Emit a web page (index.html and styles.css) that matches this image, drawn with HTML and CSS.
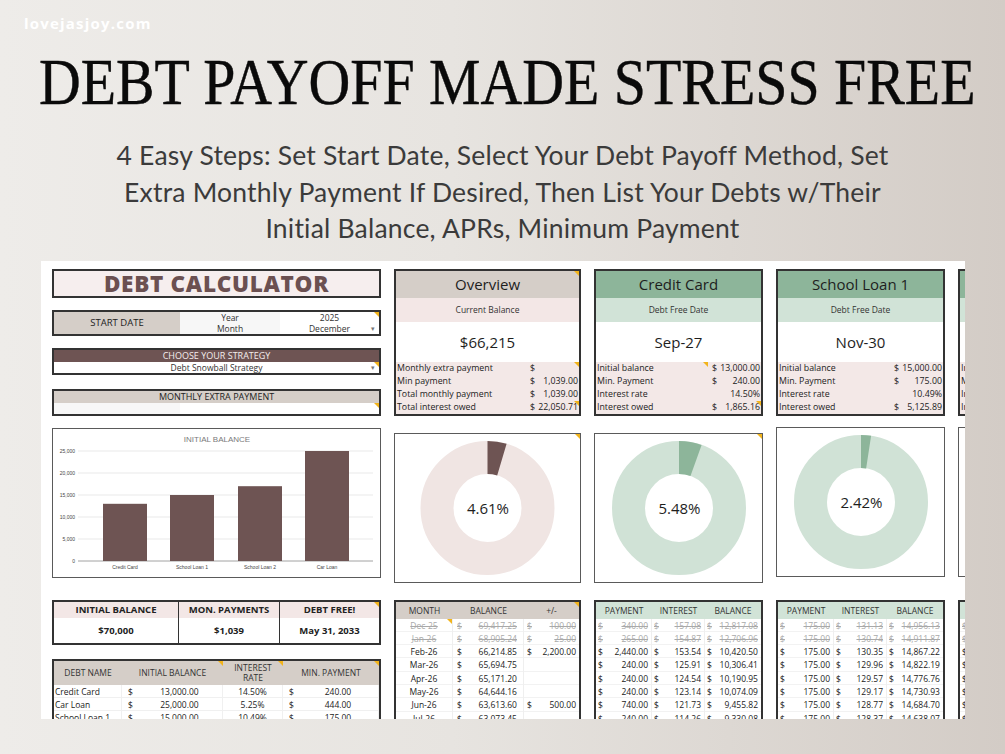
FILE: index.html
```html
<!DOCTYPE html>
<html lang="en">
<head>
<meta charset="utf-8">
<title>Debt Payoff Made Stress Free</title>
<link rel="stylesheet" href="styles.css">
</head>
<body>
<div class="page">
  <div class="brand">lovejasjoy.com</div>
  <h1 class="title"><span>DEBT PAYOFF MADE STRESS FREE</span></h1>
  <p class="subtitle">4 Easy Steps: Set Start Date, Select Your Debt Payoff Method, Set<br>Extra Monthly Payment If Desired, Then List Your Debts w/Their<br>Initial Balance, APRs, Minimum Payment</p>

  <div class="sheet">
    <!-- LEFT COLUMN -->
    <div class="col col-left">
      <div class="calc-title">DEBT CALCULATOR</div>

      <div class="start-date">
        <div class="sd-label">START DATE</div>
        <div class="sd-keys"><span>Year</span><span>Month</span></div>
        <div class="sd-vals"><span>2025</span><span>December</span><i class="caret caret-low">▾</i><b class="flag"></b></div>
      </div>

      <div class="strategy">
        <div class="strategy-head">CHOOSE YOUR STRATEGY</div>
        <div class="strategy-val">Debt Snowball Strategy<i class="caret">▾</i><b class="flag"></b></div>
      </div>

      <div class="extra">
        <div class="extra-head">MONTHLY EXTRA PAYMENT</div>
        <div class="extra-row"><span class="extra-l"></span><span class="extra-r"><b class="flag"></b></span></div>
      </div>

      <div class="chart">
        <svg class="chart-svg" viewBox="0 0 327 148" width="327" height="148">
          <text x="164" y="13" class="ch-title">INITIAL BALANCE</text>
          <g class="ch-grid">
            <line x1="25" y1="22" x2="320" y2="22"/>
            <line x1="25" y1="44" x2="320" y2="44"/>
            <line x1="25" y1="66" x2="320" y2="66"/>
            <line x1="25" y1="88" x2="320" y2="88"/>
            <line x1="25" y1="110" x2="320" y2="110"/>
          </g>
          <line x1="25" y1="132" x2="320" y2="132" class="ch-base"/>
          <g class="ch-axis ch-y">
            <text x="22" y="24">25,000</text>
            <text x="22" y="46">20,000</text>
            <text x="22" y="68">15,000</text>
            <text x="22" y="90">10,000</text>
            <text x="22" y="112">5,000</text>
            <text x="22" y="134">0</text>
          </g>
          <g class="ch-bars">
            <rect x="50" y="74.8" width="44" height="57.2"/>
            <rect x="117" y="66" width="44" height="66"/>
            <rect x="185" y="57.2" width="44" height="74.8"/>
            <rect x="252" y="22" width="44" height="110"/>
          </g>
          <g class="ch-axis ch-x">
            <text x="72" y="140">Credit Card</text>
            <text x="139" y="140">School Loan 1</text>
            <text x="207" y="140">School Loan 2</text>
            <text x="274" y="140">Car Loan</text>
          </g>
        </svg>
      </div>

      <div class="summary">
        <div class="sum-head">INITIAL BALANCE</div>
        <div class="sum-head">MON. PAYMENTS</div>
        <div class="sum-head">DEBT FREE!<b class="flag"></b></div>
        <div class="sum-val">$70,000</div>
        <div class="sum-val">$1,039</div>
        <div class="sum-val">May 31, 2033</div>
      </div>

      <div class="debts">
        <div class="debts-head">
          <div>DEBT NAME</div>
          <div>INITIAL BALANCE<b class="flag"></b></div>
          <div>INTEREST<br>RATE<b class="flag"></b></div>
          <div>MIN. PAYMENT<b class="flag"></b></div>
        </div>
        <div class="debts-row"><div class="dn">Credit Card</div><div class="money"><span>$</span><span class="mv">13,000.00</span></div><div class="rate">14.50%</div><div class="money"><span>$</span><span class="mv">240.00</span></div></div>
        <div class="debts-row"><div class="dn">Car Loan</div><div class="money"><span>$</span><span class="mv">25,000.00</span></div><div class="rate">5.25%</div><div class="money"><span>$</span><span class="mv">444.00</span></div></div>
        <div class="debts-row"><div class="dn">School Loan 1</div><div class="money"><span>$</span><span class="mv">15,000.00</span></div><div class="rate">10.49%</div><div class="money"><span>$</span><span class="mv">175.00</span></div></div>
        <div class="debts-row"><div class="dn">School Loan 2</div><div class="money"><span>$</span><span class="mv">17,000.00</span></div><div class="rate">8.20%</div><div class="money"><span>$</span><span class="mv">180.00</span></div></div>
      </div>
    </div>

    <!-- OVERVIEW COLUMN -->
    <div class="col col-overview">
      <div class="card card-neutral">
        <div class="card-head">Overview<b class="flag"></b></div>
        <div class="card-sub">Current Balance</div>
        <div class="card-big">$66,215</div>
        <div class="card-rows kv-wide">
          <div class="kv"><span class="k">Monthly extra payment</span><span class="c">$</span><span class="v"></span><b class="flag"></b></div>
          <div class="kv"><span class="k">Min payment</span><span class="c">$</span><span class="v">1,039.00</span></div>
          <div class="kv"><span class="k">Total monthly payment</span><span class="c">$</span><span class="v">1,039.00</span></div>
          <div class="kv"><span class="k">Total interest owed</span><span class="c">$</span><span class="v">22,050.71</span><b class="flag"></b></div>
        </div>
      </div>

      <div class="donut donut-wide">
        <svg viewBox="0 0 185 148" width="185" height="148">
          <circle cx="92.5" cy="74" r="50.5" class="ring ring-pink"/>
          <circle cx="92.5" cy="74" r="50.5" class="slice slice-brown" stroke-dasharray="14.63 400" transform="rotate(-90 92.5 74)"/>
          <text x="93" y="79.5" class="donut-pct">4.61%</text>
        </svg>
        <b class="flag"></b>
      </div>

      <div class="ledger ledger-month">
        <div class="lg-head lg-taupe"><div>MONTH</div><div>BALANCE</div><div>+/-</div><b class="flag"></b></div>
        <div class="lg-row struck"><div class="mo">Dec-25<b class="flag"></b></div><div class="m"><span>$</span><span>69,417.25</span></div><div class="m"><span>$</span><span>100.00</span></div></div>
        <div class="lg-row struck"><div class="mo">Jan-26</div><div class="m"><span>$</span><span>68,905.24</span></div><div class="m"><span>$</span><span>25.00</span></div></div>
        <div class="lg-row"><div class="mo">Feb-26</div><div class="m"><span>$</span><span>66,214.85</span></div><div class="m"><span>$</span><span>2,200.00</span></div></div>
        <div class="lg-row"><div class="mo">Mar-26</div><div class="m"><span>$</span><span>65,694.75</span></div><div class="m"></div></div>
        <div class="lg-row"><div class="mo">Apr-26</div><div class="m"><span>$</span><span>65,171.20</span></div><div class="m"></div></div>
        <div class="lg-row"><div class="mo">May-26</div><div class="m"><span>$</span><span>64,644.16</span></div><div class="m"></div></div>
        <div class="lg-row"><div class="mo">Jun-26</div><div class="m"><span>$</span><span>63,613.60</span></div><div class="m"><span>$</span><span>500.00</span></div></div>
        <div class="lg-row"><div class="mo">Jul-26</div><div class="m"><span>$</span><span>63,073.45</span></div><div class="m"></div></div>
      </div>
    </div>

    <!-- CREDIT CARD COLUMN -->
    <div class="col">
      <div class="card card-green">
        <div class="card-head">Credit Card</div>
        <div class="card-sub">Debt Free Date</div>
        <div class="card-big">Sep-27</div>
        <div class="card-rows">
          <div class="kv"><span class="k">Initial balance<b class="flag flag-mid"></b></span><span class="c">$</span><span class="v">13,000.00</span></div>
          <div class="kv"><span class="k">Min. Payment</span><span class="c">$</span><span class="v">240.00</span></div>
          <div class="kv"><span class="k">Interest rate</span><span class="c"></span><span class="v">14.50%</span></div>
          <div class="kv"><span class="k">Interest owed</span><span class="c">$</span><span class="v">1,865.16</span><b class="flag"></b></div>
        </div>
      </div>

      <div class="donut">
        <svg viewBox="0 0 167 148" width="167" height="148">
          <circle cx="84" cy="74" r="50.5" class="ring ring-green"/>
          <circle cx="84" cy="74" r="50.5" class="slice slice-green" stroke-dasharray="17.39 400" transform="rotate(-90 84 74)"/>
          <text x="84.5" y="79.5" class="donut-pct">5.48%</text>
        </svg>
        <b class="flag"></b>
      </div>

      <div class="ledger">
        <div class="lg-head lg-green"><div>PAYMENT</div><div>INTEREST</div><div>BALANCE</div></div>
        <div class="lg-row struck"><div class="m"><span>$</span><span>340.00</span></div><div class="m"><span>$</span><span>157.08</span></div><div class="m"><span>$</span><span>12,817.08</span></div></div>
        <div class="lg-row struck"><div class="m"><span>$</span><span>265.00</span></div><div class="m"><span>$</span><span>154.87</span></div><div class="m"><span>$</span><span>12,706.96</span></div></div>
        <div class="lg-row"><div class="m"><span>$</span><span>2,440.00</span></div><div class="m"><span>$</span><span>153.54</span></div><div class="m"><span>$</span><span>10,420.50</span></div></div>
        <div class="lg-row"><div class="m"><span>$</span><span>240.00</span></div><div class="m"><span>$</span><span>125.91</span></div><div class="m"><span>$</span><span>10,306.41</span></div></div>
        <div class="lg-row"><div class="m"><span>$</span><span>240.00</span></div><div class="m"><span>$</span><span>124.54</span></div><div class="m"><span>$</span><span>10,190.95</span></div></div>
        <div class="lg-row"><div class="m"><span>$</span><span>240.00</span></div><div class="m"><span>$</span><span>123.14</span></div><div class="m"><span>$</span><span>10,074.09</span></div></div>
        <div class="lg-row"><div class="m"><span>$</span><span>740.00</span></div><div class="m"><span>$</span><span>121.73</span></div><div class="m"><span>$</span><span>9,455.82</span></div></div>
        <div class="lg-row"><div class="m"><span>$</span><span>240.00</span></div><div class="m"><span>$</span><span>114.26</span></div><div class="m"><span>$</span><span>9,330.08</span></div></div>
      </div>
    </div>

    <!-- SCHOOL LOAN 1 COLUMN -->
    <div class="col col-raised">
      <div class="card card-green">
        <div class="card-head">School Loan 1</div>
        <div class="card-sub">Debt Free Date</div>
        <div class="card-big">Nov-30</div>
        <div class="card-rows">
          <div class="kv"><span class="k">Initial balance</span><span class="c">$</span><span class="v">15,000.00</span></div>
          <div class="kv"><span class="k">Min. Payment</span><span class="c">$</span><span class="v">175.00</span></div>
          <div class="kv"><span class="k">Interest rate</span><span class="c"></span><span class="v">10.49%</span></div>
          <div class="kv"><span class="k">Interest owed</span><span class="c">$</span><span class="v">5,125.89</span></div>
        </div>
      </div>

      <div class="donut">
        <svg viewBox="0 0 167 148" width="167" height="148">
          <circle cx="84" cy="74" r="50.5" class="ring ring-green"/>
          <circle cx="84" cy="74" r="50.5" class="slice slice-green" stroke-dasharray="7.68 400" transform="rotate(-90 84 74)"/>
          <text x="84.5" y="79.5" class="donut-pct">2.42%</text>
        </svg>
      </div>

      <div class="ledger">
        <div class="lg-head lg-green"><div>PAYMENT</div><div>INTEREST</div><div>BALANCE</div></div>
        <div class="lg-row struck"><div class="m"><span>$</span><span>175.00</span></div><div class="m"><span>$</span><span>131.13</span></div><div class="m"><span>$</span><span>14,956.13</span></div></div>
        <div class="lg-row struck"><div class="m"><span>$</span><span>175.00</span></div><div class="m"><span>$</span><span>130.74</span></div><div class="m"><span>$</span><span>14,911.87</span></div></div>
        <div class="lg-row"><div class="m"><span>$</span><span>175.00</span></div><div class="m"><span>$</span><span>130.35</span></div><div class="m"><span>$</span><span>14,867.22</span></div></div>
        <div class="lg-row"><div class="m"><span>$</span><span>175.00</span></div><div class="m"><span>$</span><span>129.96</span></div><div class="m"><span>$</span><span>14,822.19</span></div></div>
        <div class="lg-row"><div class="m"><span>$</span><span>175.00</span></div><div class="m"><span>$</span><span>129.57</span></div><div class="m"><span>$</span><span>14,776.76</span></div></div>
        <div class="lg-row"><div class="m"><span>$</span><span>175.00</span></div><div class="m"><span>$</span><span>129.17</span></div><div class="m"><span>$</span><span>14,730.93</span></div></div>
        <div class="lg-row"><div class="m"><span>$</span><span>175.00</span></div><div class="m"><span>$</span><span>128.77</span></div><div class="m"><span>$</span><span>14,684.70</span></div></div>
        <div class="lg-row"><div class="m"><span>$</span><span>175.00</span></div><div class="m"><span>$</span><span>128.37</span></div><div class="m"><span>$</span><span>14,638.07</span></div></div>
      </div>
    </div>

    <!-- SCHOOL LOAN 2 COLUMN (cut off) -->
    <div class="col col-raised">
      <div class="card card-green">
        <div class="card-head">School Loan 2</div>
        <div class="card-sub">Debt Free Date</div>
        <div class="card-big">Jan-32</div>
        <div class="card-rows">
          <div class="kv"><span class="k">Initial balance</span><span class="c">$</span><span class="v">17,000.00</span></div>
          <div class="kv"><span class="k">Min. Payment</span><span class="c">$</span><span class="v">180.00</span></div>
          <div class="kv"><span class="k">Interest rate</span><span class="c"></span><span class="v">8.20%</span></div>
          <div class="kv"><span class="k">Interest owed</span><span class="c">$</span><span class="v">4,950.10</span></div>
        </div>
      </div>

      <div class="donut">
        <svg viewBox="0 0 167 148" width="167" height="148">
          <circle cx="84" cy="74" r="50.5" class="ring ring-green"/>
        </svg>
      </div>

      <div class="ledger">
        <div class="lg-head lg-green"><div>PAYMENT</div><div>INTEREST</div><div>BALANCE</div></div>
        <div class="lg-row struck"><div class="m"><span>$</span><span>180.00</span></div><div class="m"><span>$</span><span>116.17</span></div><div class="m"><span>$</span><span>16,936.17</span></div></div>
        <div class="lg-row struck"><div class="m"><span>$</span><span>180.00</span></div><div class="m"><span>$</span><span>115.73</span></div><div class="m"><span>$</span><span>16,871.90</span></div></div>
        <div class="lg-row"><div class="m"><span>$</span><span>180.00</span></div><div class="m"><span>$</span><span>115.29</span></div><div class="m"><span>$</span><span>16,807.19</span></div></div>
        <div class="lg-row"><div class="m"><span>$</span><span>180.00</span></div><div class="m"><span>$</span><span>114.85</span></div><div class="m"><span>$</span><span>16,742.04</span></div></div>
        <div class="lg-row"><div class="m"><span>$</span><span>180.00</span></div><div class="m"><span>$</span><span>114.40</span></div><div class="m"><span>$</span><span>16,676.44</span></div></div>
        <div class="lg-row"><div class="m"><span>$</span><span>180.00</span></div><div class="m"><span>$</span><span>113.96</span></div><div class="m"><span>$</span><span>16,610.40</span></div></div>
        <div class="lg-row"><div class="m"><span>$</span><span>180.00</span></div><div class="m"><span>$</span><span>113.51</span></div><div class="m"><span>$</span><span>16,543.91</span></div></div>
        <div class="lg-row"><div class="m"><span>$</span><span>180.00</span></div><div class="m"><span>$</span><span>113.05</span></div><div class="m"><span>$</span><span>16,476.96</span></div></div>
      </div>
    </div>
  </div>
</div>
</body>
</html>
```

FILE: styles.css
```css
* { box-sizing: border-box; margin: 0; padding: 0; }

html, body { width: 1005px; height: 754px; overflow: hidden; }
body { font-family: "Open Sans", "Liberation Sans", sans-serif; color: #222; }

.page {
  width: 1005px;
  height: 754px;
  overflow: hidden;
  padding-top: 14px;
  background: linear-gradient(90deg, #eeece9 0%, #e7e4e0 45%, #d3ccc6 100%);
}

.brand {
  margin-left: 24px;
  font-family: "Open Sans", sans-serif;
  font-weight: 700;
  font-size: 15px;
  line-height: 18px;
  letter-spacing: 1.2px;
  color: #ffffff;
}

.title {
  margin-top: 18px;
  padding-left: 10px;
  display: flex;
  justify-content: center;
  font-family: "Liberation Serif", "DejaVu Serif", serif;
  font-weight: 400;
  font-size: 65px;
  line-height: 65px;
  color: #0a0a0a;
  white-space: nowrap;
  -webkit-text-stroke: 0.45px #0a0a0a;
}
.title span { display: inline-block; transform: scaleX(0.89); }

.subtitle {
  margin-top: 22px;
  text-align: center;
  font-family: Lato, "Open Sans", sans-serif;
  font-size: 26.5px;
  line-height: 36.5px;
  letter-spacing: 0.2px;
  color: #3b3b3b;
}

/* ---------- spreadsheet panel ---------- */
.sheet {
  margin: 14px 0 0 41px;
  width: 924px;
  height: 458px;
  background: #ffffff;
  padding: 8px 0 0 11px;
  display: grid;
  grid-template-columns: 329px 187px 169px 169px 169px;
  column-gap: 13px;
  align-items: start;
  overflow: hidden;
}

.col { display: flex; flex-direction: column; }

.flag {
  position: absolute;
  top: 0;
  right: 0;
  width: 0;
  height: 0;
  border-top: 5px solid #f2b41c;
  border-left: 5px solid transparent;
}
.caret {
  position: absolute;
  right: 4px;
  bottom: 0;
  font-style: normal;
  font-size: 7px;
  line-height: 10px;
  color: #777;
}

/* left column */
.calc-title {
  height: 29px;
  border: 2px solid #333;
  background: #f6eeee;
  color: #6b5051;
  font-weight: 800;
  font-size: 22.5px;
  letter-spacing: 0.7px;
  display: flex;
  align-items: center;
  justify-content: center;
  margin-bottom: 12px;
}

.start-date {
  height: 26px;
  border: 2px solid #333;
  display: grid;
  grid-template-columns: 126px 100px 1fr;
  margin-bottom: 12px;
}
.sd-label {
  background: #d5cec8;
  font-size: 9.5px;
  display: flex;
  align-items: center;
  justify-content: center;
}
.sd-keys, .sd-vals {
  position: relative;
  display: flex;
  flex-direction: column;
  align-items: center;
  justify-content: center;
  font-size: 8.5px;
  line-height: 11px;
  color: #333;
}
.sd-keys { background: #f7f7f7; }
.sd-vals { background: #ffffff; }

.strategy {
  height: 27px;
  border: 2px solid #333;
  margin-bottom: 14px;
}
.strategy-head {
  height: 12px;
  background: #6e5453;
  color: #f4eded;
  font-size: 9px;
  line-height: 12px;
  text-align: center;
}
.strategy-val {
  position: relative;
  height: 11px;
  font-size: 8.5px;
  line-height: 11px;
  text-align: center;
  color: #333;
}

.extra {
  height: 27px;
  border: 2px solid #333;
  margin-bottom: 12px;
}
.extra-head {
  height: 12px;
  background: #d5cec8;
  font-size: 9px;
  line-height: 12px;
  text-align: center;
}
.extra-row { height: 11px; display: grid; grid-template-columns: 126px 1fr; }
.extra-l { background: #f7f7f7; }
.extra-r { position: relative; background: #fff; }

.chart {
  height: 150px;
  border: 1px solid #5a5a5a;
  margin-bottom: 22px;
}
.chart-svg { display: block; }
.ch-title { font-family: "Liberation Sans", Arial, sans-serif; font-size: 8px; fill: #7a7a7a; text-anchor: middle; }
.ch-grid line { stroke: #e3e3e3; stroke-width: 0.8; }
.ch-base { stroke: #8a8a8a; stroke-width: 0.8; }
.ch-axis text { font-family: "Liberation Sans", Arial, sans-serif; font-size: 5px; fill: #444; }
.ch-y text { text-anchor: end; }
.ch-x text { text-anchor: middle; }
.ch-bars rect { fill: #6e5453; }

.summary {
  height: 45px;
  border: 2px solid #333;
  display: grid;
  grid-template-columns: 125px 101px 1fr;
  grid-template-rows: 16px 1fr;
  margin-bottom: 14px;
}
.sum-head {
  position: relative;
  background: #f3e7e6;
  font-weight: 700;
  font-size: 9.5px;
  display: flex;
  align-items: center;
  justify-content: center;
}
.sum-val {
  font-weight: 700;
  font-size: 9.5px;
  display: flex;
  align-items: center;
  justify-content: center;
}
.sum-head:nth-child(-n+2), .sum-val:nth-child(4), .sum-val:nth-child(5) { border-right: 1.5px solid #333; }

.debts {
  border: 2px solid #333;
  border-bottom: none;
  height: 80px;
}
.debts-head {
  height: 24px;
  background: #d5cec8;
  display: grid;
  grid-template-columns: 68px 101px 60px 1fr;
  font-size: 8.5px;
  line-height: 9.5px;
  color: #333;
}
.debts-head div {
  position: relative;
  display: flex;
  align-items: center;
  justify-content: center;
  text-align: center;
}
.debts-row {
  height: 13.4px;
  display: grid;
  grid-template-columns: 68px 101px 60px 1fr;
  font-size: 8.5px;
  line-height: 13.4px;
  border-bottom: 1px solid #f0f0f0;
}
.debts-row > div { border-right: 1px solid #f0f0f0; }
.dn { padding-left: 1px; white-space: nowrap; overflow: hidden; }
.money { display: flex; padding-left: 6px; }
.money .mv { flex: 1; text-align: center; padding-left: 4px; }
.rate { text-align: center; }

/* cards */
.card {
  height: 147px;
  border: 2px solid #333;
  margin-bottom: 17px;
}
.col-raised .card { margin-bottom: 11px; }
.card-head {
  position: relative;
  height: 27px;
  font-size: 15px;
  line-height: 27px;
  text-align: center;
  color: #1e1e1e;
  white-space: nowrap;
}
.card-neutral .card-head { background: #d5cec8; }
.card-green .card-head { background: #8db59a; }
.card-sub {
  height: 24px;
  font-size: 8.5px;
  line-height: 24px;
  text-align: center;
  color: #333;
}
.card-neutral .card-sub { background: #f3e7e6; }
.card-green .card-sub { background: #d1e3d7; }
.card-big {
  height: 40px;
  font-size: 15px;
  line-height: 40px;
  text-align: center;
  color: #1e1e1e;
  background: #fff;
}
.card-rows { background: #f3e8e7; height: 52px; }
.kv {
  position: relative;
  height: 13px;
  display: grid;
  grid-template-columns: 115px 8px 1fr;
  align-items: center;
  font-size: 8.8px;
  padding: 0 1px 0 1px;
  white-space: nowrap;
  color: #222;
}
.kv-wide .kv { grid-template-columns: 133px 8px 1fr; }
.kv .k { position: relative; height: 13px; line-height: 13px; }
.kv .v { justify-self: end; }
.flag-mid { right: 4px; }

/* donuts */
.donut {
  position: relative;
  height: 150px;
  border: 1px solid #5a5a5a;
  margin-bottom: 17px;
}
.col-raised .donut { margin-bottom: 23px; }
.donut svg { display: block; }
.ring { fill: none; stroke-width: 33; }
.ring-pink { stroke: #f0e5e3; }
.ring-green { stroke: #d0e2d6; }
.slice { fill: none; stroke-width: 33; }
.slice-brown { stroke: #6e5453; }
.slice-green { stroke: #8db59a; }
.donut-pct { font-family: "Open Sans", sans-serif; font-size: 15px; fill: #1e1e1e; text-anchor: middle; }

/* ledgers */
.ledger {
  border: 2px solid #333;
  border-bottom: none;
  height: 130px;
}
.lg-head {
  position: relative;
  height: 17px;
  display: grid;
  grid-template-columns: 56px 53px 1fr;
  font-size: 8.5px;
  color: #333;
}
.lg-head div { display: flex; align-items: center; justify-content: center; }
.lg-taupe { background: #d5cec8; }
.lg-green { background: #d1e3d7; }
.lg-row {
  height: 13.3px;
  display: grid;
  grid-template-columns: 56px 53px 1fr;
  font-size: 8.5px;
  line-height: 13.3px;
  border-bottom: 1px solid #f2f2f2;
  color: #222;
}
.ledger-month .lg-head, .ledger-month .lg-row { grid-template-columns: 57px 71px 1fr; }
.lg-row > div { position: relative; border-right: 1px solid #efefef; white-space: nowrap; }
.lg-row > div:last-child { border-right: none; }
.lg-row .m { display: flex; justify-content: space-between; padding: 0 3px 0 2px; }
.lg-row .mo { text-align: center; }
.ledger-month .lg-row .m { padding: 0 6px 0 4px; }
.ledger-month .lg-row .m:last-child { padding: 0 3px 0 3px; }
.struck { color: #a9a9a9; text-decoration: line-through; }
```
